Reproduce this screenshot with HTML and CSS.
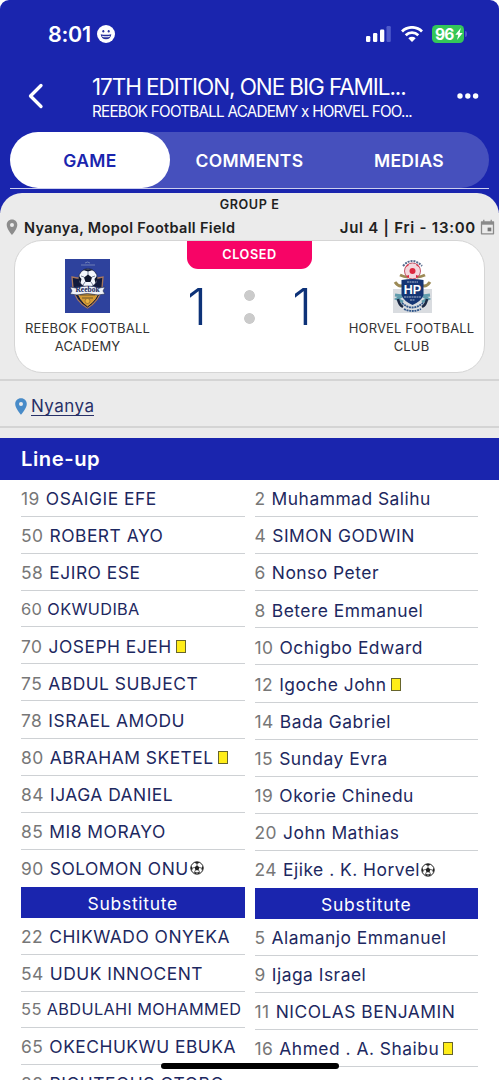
FILE: index.html
```
<!DOCTYPE html>
<html lang="en">
<head>
<meta charset="utf-8">
<title>Match line-up</title>
<link rel="stylesheet" href="styles.css">
</head>
<body>
<main class="screen">
  <header class="top">
    <div class="status">
      <div class="status-left">
        <span class="clock">8:01</span>
        <svg class="smile" viewBox="0 0 18 18"><circle cx="9" cy="9" r="9" fill="#fff"/><ellipse cx="6.3" cy="6.2" rx="1" ry="1.3" fill="#26309b"/><ellipse cx="11.7" cy="6.2" rx="1" ry="1.3" fill="#26309b"/><path d="M3.7 9.2q5.3 1.2 10.6 0q-.5 5-5.3 5t-5.3-5z" fill="#26309b"/><path d="M5 10.7q4 1 8 0l-.5 1.2q-3.5.7-7 0z" fill="#fff"/></svg>
      </div>
      <div class="status-right">
        <svg class="signal" viewBox="0 0 25 16"><rect x="0" y="10" width="4.3" height="6" rx="1.2" fill="#fff"/><rect x="7" y="7" width="4.3" height="9" rx="1.2" fill="#fff"/><rect x="14" y="3.5" width="4.3" height="12.5" rx="1.2" fill="#fff"/><rect x="20.5" y="0" width="4.3" height="16" rx="1.2" fill="#4f5acb"/></svg>
        <svg class="wifi" viewBox="0 0 22 16"><g fill="none" stroke="#fff" stroke-width="2.8"><path d="M1 5.4a14.4 14.4 0 0 1 20 0"/><path d="M4.7 9.2a9.2 9.2 0 0 1 12.6 0"/></g><path d="M7.3 12.2a5.4 5.4 0 0 1 7.4 0L11 16z" fill="#fff"/></svg>
        <div class="battery"><span>96</span><svg viewBox="0 0 8 12"><path d="M5.8 0L.3 6.8h3L2 12l5.700-7.100H4.600z" fill="#fff"/></svg></div>
        <i class="battery-tip"></i>
      </div>
    </div>
    <div class="title-bar">
      <svg class="back" viewBox="0 0 16 26"><path d="M13 2.500L2.500 13 13 23.500" fill="none" stroke="#fff" stroke-width="3.300" stroke-linecap="round" stroke-linejoin="round"/></svg>
      <div class="titles">
        <h1>17TH EDITION, ONE BIG FAMIL...</h1>
        <p>REEBOK FOOTBALL ACADEMY x HORVEL FOO...</p>
      </div>
      <svg class="more" viewBox="0 0 22 6"><g fill="#fff"><circle cx="3" cy="3" r="2.700"/><circle cx="10.800" cy="3" r="2.700"/><circle cx="18.600" cy="3" r="2.700"/></g></svg>
    </div>
    <nav class="tabs"><a class="tab active">GAME</a><a class="tab">COMMENTS</a><a class="tab">MEDIAS</a></nav>
  </header>

  <section class="match">
    <div class="group">GROUP E</div>
    <div class="meta">
      <svg class="pin" viewBox="0 0 12 17"><path fill-rule="evenodd" d="M6 .5C2.700.5.7 3 .7 5.900.7 9.800 6 16 6 16s5.300-6.200 5.300-10.100C11.300 3 9.300.5 6 .5zM6 4a2 2 0 1 1 0 4 2 2 0 0 1 0-4z" fill="#8c8c8c"/></svg>
      <span class="venue">Nyanya, Mopol Football Field</span>
      <span class="date">Jul 4 | Fri - 13:00</span>
      <svg class="calendar" viewBox="0 0 15 17"><path d="M3.800.8v3M11.200.8v3M1.500 2.800h12v12h-12z" fill="none" stroke="#8a8a8a" stroke-width="1.300" stroke-linejoin="round"/><path d="M1.500 3h12v2.700h-12z" fill="#8a8a8a"/><rect x="7.600" y="8.600" width="3.700" height="3.700" fill="#777"/></svg>
    </div>
    <div class="card">
      <div class="team">
        <svg class="crest crest-left" viewBox="0 0 45 54"><rect width="45" height="54" fill="#2e429d"/><path d="M16 6h14M20 4l2.500-1 2.500 1" stroke="#8191bd" stroke-width=".8" fill="none"/><path d="M7 18l5 1 21 0 5-1-1 11q-3 13-14.500 20Q10 42 8 29z" fill="#131b3c" stroke="#a9775c" stroke-width="1.300"/><path d="M11 31h24q-2 10-12.500 17Q13 41 11 31z" fill="#d59b36" stroke="#151a35"/><path d="M15 36h15M17 39h11" stroke="#6b552b"/><circle cx="22.500" cy="42" r="2.500" fill="#e9b344" stroke="#805d2b" stroke-width=".6"/><circle cx="23" cy="19" r="9.300" fill="#f4f7fc" stroke="#151b35" stroke-width=".7"/><g fill="#10172d"><path d="M23 15.500l4 3-1.500 4.500h-5L19 18.500zM18 11l5 1.500 5-1.500-2-.8h-6zM14 17l2.500 3-1 4-1.500-3zM32 17l-2.500 3 1 4 1.500-3z"/></g><path d="M23 12v4M19 18l-3-1M27 18l3-1M20 23l-2 3M26 23l2 3" stroke="#59647d" stroke-width=".8"/><path d="M5 28l6 1q12-4 23 0l6-1-2 4 2 3-7 1q-11-3-21 0l-7-1 2-3z" fill="#eff1f8" stroke="#28355e" stroke-width=".7"/><text x="22.500" y="33" text-anchor="middle" class="crest-serif">Reebok</text></svg>
        <div class="team-name">REEBOK FOOTBALL<br>ACADEMY</div>
      </div>
      <div class="center">
        <div class="badge">CLOSED</div>
        <div class="score"><span>1</span><i class="dots"></i><span>1</span></div>
      </div>
      <div class="team">
        <svg class="crest crest-right" viewBox="0 0 39 54"><path d="M0 30h39v24H0z" fill="#d9dce0"/><path d="M10 7Q19-3 29 7" fill="none" stroke="#54698c" stroke-width="2" stroke-dasharray="2 1"/><g stroke="#9c8a56" stroke-width="3" fill="none"><path d="M7 16q4 2 8 2M32 16q-4 2-8 2M2 23q4 6 9 3M37 23q-4 6-9 3"/></g><g stroke="#5f9cad" stroke-width="3" fill="none"><path d="M2 36l7 1-5 3 6 3M37 36l-7 1 5 3-6 3"/></g><path d="M5 40q1 6 5 8M34 40q-1 6-5 8" stroke="#1b2945" stroke-width="2.500" fill="none"/><path d="M9 44q10 9 21 0M11 50q8 4 17 0" stroke="#31578b" stroke-width="1.800" fill="none" stroke-dasharray="2 .7"/><circle cx="19.500" cy="12" r="8" fill="#f3d8de" stroke="#b53048" stroke-width=".8"/><g fill="#dd2840"><circle cx="19.500" cy="12" r="3"/><path d="M12 9l4-3-1-1zM27 9l-4-3 1-1zM13 17l3 2 0-3zM26 17l-3 2v-3z"/></g><path d="M8.500 21q11-2 22 0v15q-2 6-11 10Q10.500 42 8.500 36z" fill="#153574"/><path d="M14 23h11M11 38h17M17 41h5" stroke="#a8b6cb" stroke-width="1.200" stroke-dasharray="2 .5"/><text x="19.500" y="35" text-anchor="middle" class="crest-hp">HP</text></svg>
        <div class="team-name">HORVEL FOOTBALL<br>CLUB</div>
      </div>
    </div>
    <div class="place">
      <svg class="pin-blue" viewBox="0 0 12 17"><path fill-rule="evenodd" d="M6 .3C2.500.3.2 2.800.2 5.900.2 10 6 16.700 6 16.700S11.800 10 11.800 5.900C11.800 2.800 9.500.3 6 .3zM6 4a2 2 0 1 1 0 4 2 2 0 0 1 0-4z" fill="#488bc8"/></svg>
      <a>Nyanya</a>
    </div>
  </section>

  <h2 class="lineup-head">Line-up</h2>
  <section class="lineup">
    <div class="col">
      <div class="row"><b>19</b>OSAIGIE EFE</div>
      <div class="row"><b>50</b>ROBERT AYO</div>
      <div class="row"><b>58</b>EJIRO ESE</div>
      <div class="row small"><b>60</b>OKWUDIBA</div>
      <div class="row"><b>70</b>JOSEPH EJEH<i class="yellow"></i></div>
      <div class="row"><b>75</b>ABDUL SUBJECT</div>
      <div class="row"><b>78</b>ISRAEL AMODU</div>
      <div class="row"><b>80</b>ABRAHAM SKETEL<i class="yellow"></i></div>
      <div class="row"><b>84</b>IJAGA DANIEL</div>
      <div class="row"><b>85</b>MI8 MORAYO</div>
      <div class="row last"><b>90</b>SOLOMON ONU<svg class="ball" viewBox="0 0 14 14"><circle cx="7" cy="7" r="6.200" fill="#fff" stroke="#222"/><path d="M7 4.500l2.500 1.800-1 2.900h-3l-1-2.900zM4 1.500L7 3l3-1.500L7 .8zM1 5l1.700 2L2 10 .8 7.500zM13 5l-1.700 2 .7 3 1.200-2.500zM4 11l2.500.3L8 13H5zM10 11l-2.500.3L6 13h3z" fill="#222"/><path d="M7 3v2M2.700 7l2-.6M11.300 7l-2-.6M4.500 11l1-2M9.500 11l-1-2" stroke="#222" stroke-width=".7"/></svg></div>
      <div class="sub">Substitute</div>
      <div class="row bench"><b>22</b>CHIKWADO ONYEKA</div>
      <div class="row bench"><b>54</b>UDUK INNOCENT</div>
      <div class="row small"><b>55</b>ABDULAHI MOHAMMED</div>
      <div class="row"><b>65</b>OKECHUKWU EBUKA</div>
      <div class="row"><b>88</b>RIGHTEOUS OTOBO</div>
    </div>
    <div class="col">
      <div class="row"><b>2</b>Muhammad Salihu</div>
      <div class="row"><b>4</b>SIMON GODWIN</div>
      <div class="row"><b>6</b>Nonso Peter</div>
      <div class="row"><b>8</b>Betere Emmanuel</div>
      <div class="row"><b>10</b>Ochigbo Edward</div>
      <div class="row"><b>12</b>Igoche John<i class="yellow"></i></div>
      <div class="row"><b>14</b>Bada Gabriel</div>
      <div class="row"><b>15</b>Sunday Evra</div>
      <div class="row"><b>19</b>Okorie Chinedu</div>
      <div class="row"><b>20</b>John Mathias</div>
      <div class="row last"><b>24</b>Ejike . K. Horvel<svg class="ball" viewBox="0 0 14 14"><circle cx="7" cy="7" r="6.200" fill="#fff" stroke="#222"/><path d="M7 4.500l2.500 1.800-1 2.900h-3l-1-2.900zM4 1.500L7 3l3-1.500L7 .8zM1 5l1.700 2L2 10 .8 7.500zM13 5l-1.700 2 .7 3 1.200-2.500zM4 11l2.500.3L8 13H5zM10 11l-2.500.3L6 13h3z" fill="#222"/><path d="M7 3v2M2.700 7l2-.6M11.300 7l-2-.6M4.500 11l1-2M9.500 11l-1-2" stroke="#222" stroke-width=".7"/></svg></div>
      <div class="sub">Substitute</div>
      <div class="row bench"><b>5</b>Alamanjo Emmanuel</div>
      <div class="row"><b>9</b>Ijaga Israel</div>
      <div class="row"><b>11</b>NICOLAS BENJAMIN</div>
      <div class="row"><b>16</b>Ahmed . A. Shaibu<i class="yellow"></i></div>
      <div class="row"><b>17</b>Benneth Bamh</div>
    </div>
  </section>
  <div class="home-indicator"></div>
</main>
</body>
</html>
```
FILE: styles.css
```
* { box-sizing: border-box; }
body { margin: 0; background: #fff; font-family: Inter, "Liberation Sans", sans-serif; }
svg { display: block; flex: none; }
h1, h2, p { margin: 0; }
.screen { position: relative; width: 499px; height: 1080px; overflow: hidden; background: #fff; }

.top { height: 213px; background: #1a25ae; border-radius: 9px 9px 0 0; color: #fff; }
.status { display: flex; justify-content: space-between; height: 68px; padding: 22px 32px 0 48px; }
.status-left, .status-right { display: flex; align-items: center; height: 24px; }
.clock { font-size: 21.500px; font-weight: 600; letter-spacing: -.25px; width: 49px; white-space: nowrap; }
.smile { width: 18px; height: 18px; }
.signal { width: 25px; height: 16px; margin-right: 10px; }
.wifi { width: 22px; height: 16px; margin-right: 9px; }
.battery { display: flex; align-items: center; width: 32px; height: 18px; padding-left: 3px; border-radius: 4.500px; background: #34c759; font-size: 15.500px; font-weight: 700; letter-spacing: -.7px; }
.battery svg { width: 8px; height: 12px; margin-left: 1px; }
.battery-tip { width: 2px; height: 6px; margin-left: 1px; border-radius: 0 2px 2px 0; background: #4d50cf; }

.title-bar { display: flex; height: 64px; padding: 0 20px 0 28px; }
.back { width: 16px; height: 26px; margin-top: 15px; }
.titles { flex: 1; margin-left: 48px; white-space: nowrap; }
.titles h1 { font-size: 22.500px; line-height: 28px; font-weight: 400; letter-spacing: -1.080px; margin-top: 5px; }
.titles p { font-size: 15.200px; line-height: 21px; letter-spacing: -.75px; }
.more { width: 22px; height: 6px; margin-top: 25px; }

.tabs { display: flex; height: 57px; margin: 0 10px; background: linear-gradient(#cdd0ee, #cdd0ee) bottom / 100% 1px no-repeat; }
.tab { flex: 1; height: 56px; display: flex; align-items: center; justify-content: center; background: #4650bd; font-size: 17.500px; font-weight: 600; letter-spacing: .3px; }
.tab:last-child { border-radius: 0 28px 28px 0; }
.tab:nth-child(2) { margin-left: -28px; padding-left: 28px; flex: 0 0 187px; }
.tab.active { position: relative; z-index: 1; flex: 0 0 160px; border-radius: 28px; background: #fff; color: #1a25ae; }

.match { position: relative; margin-top: -20px; height: 245px; border-radius: 22px 22px 0 0; background: #ebebeb; color: #202020; }
.group { padding-top: 4px; height: 23px; text-align: center; font-size: 12.600px; line-height: 15px; font-weight: 600; letter-spacing: .6px; }
.meta { display: flex; align-items: center; height: 22px; padding: 0 4px 0 6px; font-size: 14.500px; font-weight: 600; letter-spacing: .33px; white-space: nowrap; }
.pin { width: 12px; height: 17px; }
.venue { margin-left: 6px; }
.date { margin-left: auto; font-size: 15px; letter-spacing: .75px; }
.calendar { width: 15px; height: 17px; margin-left: 4px; }
.card { display: flex; height: 133px; margin: 2px 14px 0; background: #fff; border: 1px solid #d5d5d5; border-radius: 28px; }
.team { width: 145px; display: flex; flex-direction: column; align-items: center; padding-top: 18px; }
.crest { height: 54px; }
.crest-left { width: 45px; }
.crest-right { width: 39px; margin-left: 1px; }
.crest-serif { font: bold 7.500px "Liberation Serif", serif; fill: #17275a; }
.crest-hp { font: bold 12.500px "Liberation Sans", sans-serif; fill: #fff; }
.team-name { margin-top: 6px; text-align: center; font-size: 13px; line-height: 18px; letter-spacing: .15px; white-space: nowrap; color: #333; }
.center { flex: 1; display: flex; flex-direction: column; align-items: center; }
.badge { width: 125px; height: 28px; border-radius: 0 0 11px 11px; background: #f70466; color: #fff; text-align: center; font-size: 12.700px; line-height: 28px; font-weight: 600; letter-spacing: .55px; }
.score { display: flex; align-items: center; gap: 36px; height: 76px; color: #0d3278; font-size: 50px; font-weight: 300; }
.score span { width: 22px; text-align: center; }
.dots { width: 11px; height: 34px; background: radial-gradient(circle at 5.500px 5.500px, #cbcbcb 5px, transparent 5.700px), radial-gradient(circle at 5.500px 28.500px, #cbcbcb 5px, transparent 5.700px); }
.place { display: flex; align-items: center; height: 49px; margin-top: 6px; padding: 5px 15px 0; border: solid #d4d4d4; border-width: 2px 0; font-size: 17px; letter-spacing: .45px; color: #273067; }
.place a { margin-left: 4px; line-height: 18px; border-bottom: 1px solid #273067; }
.pin-blue { width: 12px; height: 17px; }

.lineup-head { height: 42px; padding-left: 21px; background: #1a25ae; color: #fff; font-size: 20.200px; line-height: 42px; font-weight: 600; letter-spacing: .55px; }
.lineup { display: flex; gap: 10px; padding: 0 21px; }
.col { width: 223.500px; }
.row { display: flex; align-items: center; height: 37.100px; padding-top: 1.500px; border-bottom: 1px solid #ced1d4; color: #1d2860; font-size: 17.400px; letter-spacing: .5px; white-space: nowrap; }
.row b { margin-right: 6px; font-weight: 400; color: #777; }
.row.small { height: 36px; padding-top: 0; font-size: 16.300px; letter-spacing: .35px; }
.row.small b { font-size: 16.500px; margin-right: 5px; }
.row.last { border-bottom: 0; height: 37.300px; padding-top: 0; }
.row.bench { height: 36.700px; }
.yellow { width: 10px; height: 13px; margin-left: 4px; border: 1px solid #67652c; background: #ffed18; }
.ball { width: 14px; height: 14px; margin-left: 1px; }
.sub { height: 31px; padding-top: 1px; background: #1a25ae; color: #fff; text-align: center; font-size: 17.500px; line-height: 31px; letter-spacing: .7px; }
.home-indicator { position: absolute; left: 161px; bottom: 11px; width: 178px; height: 6px; border-radius: 3px; background: #000; }
```
